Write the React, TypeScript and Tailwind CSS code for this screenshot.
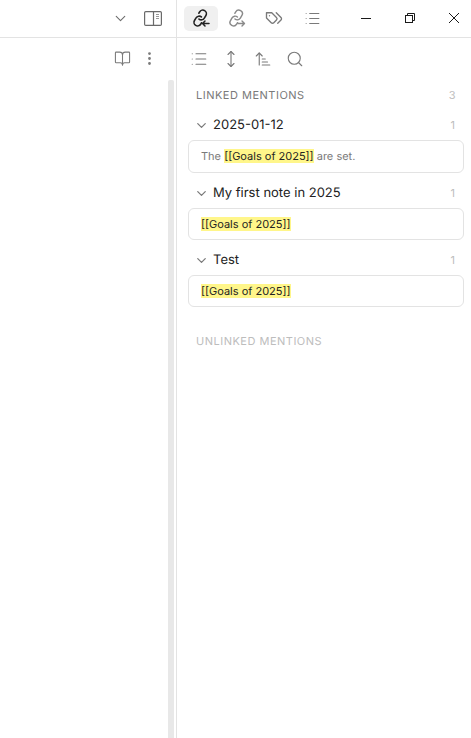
import type { ReactNode } from "react";
import { List, MoveVertical, ArrowUpNarrowWide, Search, BookOpen, EllipsisVertical, ChevronDown } from "lucide-react";

const linkT = "translate(9.2,10) rotate(-14) scale(0.72) translate(-12,-12)";

function Chain({ width }: { width: number }) {
  return (
    <g transform={linkT} strokeWidth={width}>
      <path d="M10 13a5 5 0 0 0 7.54.54l3-3a5 5 0 0 0-7.07-7.07l-1.72 1.71" />
      <path d="M14 11a5 5 0 0 0-7.54-.54l-3 3a5 5 0 0 0 7.07 7.07l1.71-1.71" />
    </g>
  );
}

function LinkIn({ cls }: { cls: string }) {
  return (
    <svg viewBox="0 0 20 20" fill="none" stroke="currentColor" strokeWidth="1.5" strokeLinecap="round" strokeLinejoin="round" className={cls}>
      <Chain width={2.2} />
      <path d="M18 15.5h-6.5M14 13l-2.5 2.5 2.5 2.5" />
    </svg>
  );
}

function LinkOut({ cls }: { cls: string }) {
  return (
    <svg viewBox="0 0 20 20" fill="none" stroke="currentColor" strokeWidth="1.4" strokeLinecap="round" strokeLinejoin="round" className={cls}>
      <Chain width={2} />
      <path d="M11 15.5h6.5M15 13l2.5 2.5L15 18" />
    </svg>
  );
}

function Tags({ cls }: { cls: string }) {
  return (
    <svg viewBox="0 0 24 24" fill="none" stroke="currentColor" strokeWidth="1.8" strokeLinecap="round" strokeLinejoin="round" className={cls}>
      <path d="M9 5H2v7l6.29 6.29c.94.94 2.48.94 3.42 0l3.58-3.58c.94-.94.94-2.48 0-3.42L9 5Z" />
      <path d="M6 9.01V9" />
      <path d="m15 5 6.3 6.3a2.4 2.4 0 0 1 0 3.4L17 19" />
    </svg>
  );
}

function SidebarRight() {
  return (
    <svg viewBox="0 0 18 15" fill="none" stroke="currentColor" strokeWidth="1.2" className="w-[18px] h-[15px] text-[#6a6a6a]">
      <rect x="0.6" y="0.6" width="16.8" height="13.8" rx="1.2" />
      <path d="M9.5 0.6v13.8" />
      <path d="M12 3.5h3M12 5.5h3M12 7.5h3" stroke="#999999" strokeWidth="1" />
    </svg>
  );
}

function Section({ title, cardH, children }: { title: string; cardH: string; children: ReactNode }) {
  return (
    <div>
      <div className="flex items-center h-[25px] pl-[6px] pr-[8px] text-[13px] text-[#222222]">
        <ChevronDown className="w-[15px] h-[15px] text-[#7a7a7a] mr-[4px] -mt-[1px]" strokeWidth={2} />
        <span className="flex-1">{title}</span>
        <span className="text-[11px] text-[#bdbdbd] pr-[1px]">1</span>
      </div>
      <div className={`mt-[2px] ${cardH} rounded-[6px] border border-[#e3e3e3] px-[12px] flex items-center text-[11px] text-[#7a7a7a] leading-[15px]`}>
        <span>{children}</span>
      </div>
    </div>
  );
}

const Mark = () => <mark className="bg-[#fff68a] text-[#222222]">[[Goals of 2025]]</mark>;

export default function App() {
  return (
    <div className="w-[471px] h-[738px] bg-white flex overflow-hidden font-['Inter',sans-serif] antialiased [text-rendering:geometricPrecision]">
      <div className="w-[176px] shrink-0 flex flex-col">
        <div className="h-[37px] shrink-0 flex items-center justify-end pr-[14px] gap-[15px] text-[#6e6e6e]">
          <ChevronDown className="w-[17px] h-[17px]" strokeWidth={1.6} />
          <SidebarRight />
        </div>
        <div className="h-px bg-[#e3e3e3] shrink-0" />
        <div className="h-[40px] shrink-0 flex items-center justify-end pr-[18px] gap-[10px] text-[#7a7a7a]">
          <BookOpen className="w-[17px] h-[17px]" strokeWidth={1.5} />
          <EllipsisVertical className="w-[17px] h-[17px]" strokeWidth={2} />
        </div>
        <div className="flex-1 flex justify-end pr-[2px] pt-[2px]">
          <div className="w-[6px] bg-[#e8e8e8] rounded-t-[2px]" />
        </div>
      </div>
      <div className="w-px bg-[#e3e3e3] shrink-0" />
      <div className="flex-1 flex flex-col min-w-0">
        <div className="h-[37px] shrink-0 flex items-center pl-[7px] pb-[1px]">
          <div className="w-[34px] h-[25px] rounded-[5px] bg-[#f0f0f0] flex items-center justify-center text-[#222222]">
            <LinkIn cls="w-[20px] h-[20px]" />
          </div>
          <div className="w-[36px] flex justify-center text-[#8a8a8a] ml-[1px]">
            <LinkOut cls="w-[20px] h-[20px]" />
          </div>
          <div className="w-[38px] flex justify-center text-[#7a7a7a]">
            <Tags cls="w-[18px] h-[18px]" />
          </div>
          <div className="w-[38px] flex justify-center text-[#7a7a7a]">
            <List className="w-[17px] h-[17px]" strokeWidth={1.5} />
          </div>
          <div className="ml-auto flex items-center gap-[34px] text-[#1a1a1a] pr-[12px]">
            <svg viewBox="0 0 10 10" className="w-[10px] h-[10px]" fill="none" stroke="currentColor"><path d="M0 5.5h10" /></svg>
            <svg viewBox="0 0 10 10" className="w-[10px] h-[10px]" fill="none" stroke="currentColor"><rect x="0.5" y="2.5" width="7" height="7" /><path d="M2.5 2.5V.5h7v7h-2" /></svg>
            <svg viewBox="0 0 10 10" className="w-[10px] h-[10px]" fill="none" stroke="currentColor"><path d="M0 0l10 10M10 0 0 10" /></svg>
          </div>
        </div>
        <div className="h-px bg-[#e3e3e3] shrink-0" />
        <div className="h-[42px] shrink-0 flex items-center pl-[13px] gap-[14px] text-[#7a7a7a]">
          <List className="w-[18px] h-[18px]" strokeWidth={1.5} />
          <MoveVertical className="w-[18px] h-[18px]" strokeWidth={1.5} />
          <ArrowUpNarrowWide className="w-[18px] h-[18px]" strokeWidth={1.5} />
          <Search className="w-[18px] h-[18px]" strokeWidth={1.5} />
        </div>
        <div className="pl-[11px] pr-[7px] pt-[6px]">
          <div className="flex items-center h-[18px] pl-[8px] pr-[8px] text-[11px] tracking-[0.5px] text-[#7a7a7a]">
            <span className="flex-1">LINKED MENTIONS</span>
            <span className="text-[#bdbdbd]">3</span>
          </div>
          <div className="mt-[9px] flex flex-col gap-[8px]">
            <Section title="2025-01-12" cardH="h-[33px]">The <Mark /> are set.</Section>
            <Section title="My first note in 2025" cardH="h-[32px]"><Mark /></Section>
            <Section title="Test" cardH="h-[32px]"><Mark /></Section>
          </div>
          <div className="mt-[25px] h-[18px] pl-[8px] flex items-center text-[11px] tracking-[0.5px] text-[#bdbdbd]">UNLINKED MENTIONS</div>
        </div>
      </div>
    </div>
  );
}
